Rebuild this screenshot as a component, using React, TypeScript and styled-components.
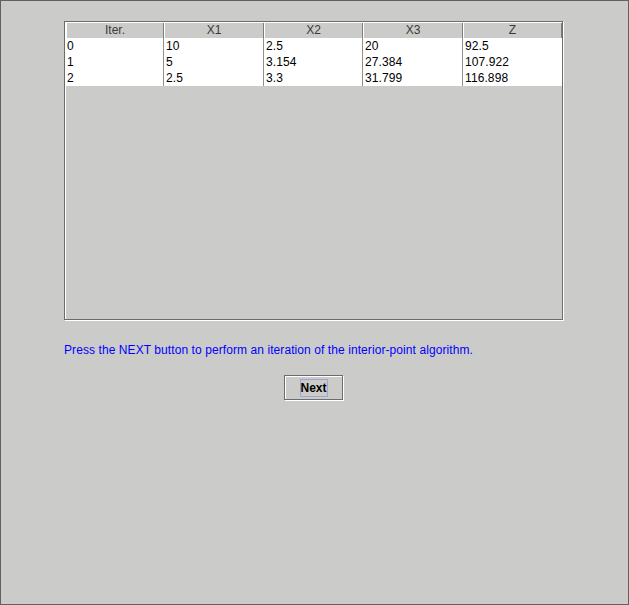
import React from "react";
import styled, { createGlobalStyle } from "styled-components";

const Global = createGlobalStyle`
  html, body { margin: 0; padding: 0; background: #cbccc9; }
  body { font-family: "Liberation Sans", Arial, sans-serif; font-size: 12px; }
`;

const Frame = styled.div`
  box-sizing: border-box;
  width: 629px;
  height: 605px;
  border: 1px solid #5f625f;
  background: #cbccc9;
  padding: 20px 0 0 63px;
  display: flex;
  flex-direction: column;
`;

const Column = styled.div`
  width: 500px;
  display: flex;
  flex-direction: column;
`;

const ScrollPane = styled.div`
  box-sizing: border-box;
  width: 499px;
  height: 299px;
  margin-bottom: 1px;
  border: 1px solid #6a6d6a;
  box-shadow: 1px 1px 0 #ffffff, inset 1px 1px 0 #ffffff;
  padding: 1px 0 0 1px;
  display: flex;
  flex-direction: column;
`;

const cols = "98px 100px 99px 100px 99px";

const HeaderRow = styled.div`
  display: grid;
  grid-template-columns: ${cols};
  height: 15px;
`;

const HeaderCell = styled.div`
  box-sizing: border-box;
  background: #cbccc9;
  border-left: 1px solid #ffffff;
  border-right: 1px solid #7c7e7c;
  color: #3a3a3a;
  text-align: center;
  line-height: 15px;
  font-size: 12px;
  white-space: nowrap;
`;

const Body = styled.div`
  display: flex;
  flex-direction: column;
`;

const Row = styled.div`
  display: grid;
  grid-template-columns: ${cols};
  height: 16px;
  background: #ffffff;
`;

const Cell = styled.div<{ $last?: boolean; $first?: boolean }>`
  box-sizing: border-box;
  border-right: ${(p) => (p.$last ? "none" : "1px solid #8f918f")};
  padding-left: ${(p) => (p.$first ? "1px" : "2px")};
  color: #000000;
  line-height: 16px;
  font-size: 12px;
  letter-spacing: 0.1px;
  white-space: nowrap;
`;

const Message = styled.div`
  margin-top: 22px;
  color: #0000ff;
  font-size: 12px;
  line-height: 14px;
  letter-spacing: 0.08px;
  white-space: nowrap;
`;

const ButtonRow = styled.div`
  display: flex;
  justify-content: center;
  margin-top: 18px;
`;

const Button = styled.button`
  box-sizing: border-box;
  width: 59px;
  height: 25px;
  margin-right: 1px;
  border: 1px solid #6a6d6a;
  box-shadow: 1px 1px 0 #ffffff, inset 1px 1px 0 #ffffff;
  background: #cbccc9;
  padding: 0;
  display: flex;
  align-items: center;
  justify-content: center;
  font-family: "Liberation Sans", Arial, sans-serif;
  cursor: pointer;
`;

const Focus = styled.span`
  box-sizing: border-box;
  width: 28px;
  height: 18px;
  border: 1px solid #a3a3d9;
  font-weight: bold;
  font-size: 12px;
  line-height: 16px;
  color: #000000;
  display: flex;
  align-items: center;
  justify-content: center;
`;

const headers = ["Iter.", "X1", "X2", "X3", "Z"];
const data = [
  ["0", "10", "2.5", "20", "92.5"],
  ["1", "5", "3.154", "27.384", "107.922"],
  ["2", "2.5", "3.3", "31.799", "116.898"],
];

export default function App() {
  return (
    <>
      <Global />
      <Frame>
        <Column>
          <ScrollPane>
            <HeaderRow>
              {headers.map((h) => (
                <HeaderCell key={h}>{h}</HeaderCell>
              ))}
            </HeaderRow>
            <Body>
              {data.map((r, i) => (
                <Row key={i}>
                  {r.map((c, j) => (
                    <Cell key={j} $first={j === 0} $last={j === r.length - 1}>
                      {c}
                    </Cell>
                  ))}
                </Row>
              ))}
            </Body>
          </ScrollPane>
          <Message>
            Press the NEXT button to perform an iteration of the interior-point algorithm.
          </Message>
          <ButtonRow>
            <Button>
              <Focus>Next</Focus>
            </Button>
          </ButtonRow>
        </Column>
      </Frame>
    </>
  );
}
